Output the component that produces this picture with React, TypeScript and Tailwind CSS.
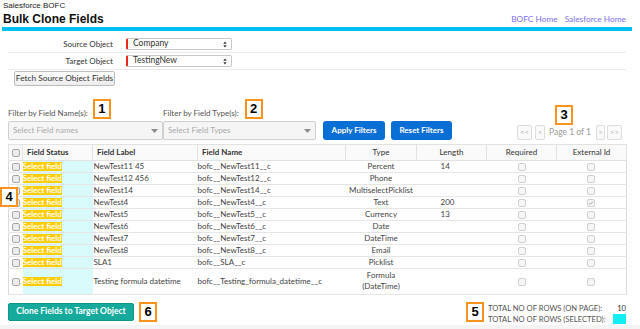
import React from 'react';

type Row = {
  label: string;
  name: string;
  type: string;
  length?: string;
  ext?: boolean;
  tall?: boolean;
};

const rows: Row[] = [
  { label: 'NewTest11 45', name: 'bofc__NewTest11__c', type: 'Percent', length: '14' },
  { label: 'NewTest12 456', name: 'bofc__NewTest12__c', type: 'Phone' },
  { label: 'NewTest14', name: 'bofc__NewTest14__c', type: 'MultiselectPicklist' },
  { label: 'NewTest4', name: 'bofc__NewTest4__c', type: 'Text', length: '200', ext: true },
  { label: 'NewTest5', name: 'bofc__NewTest5__c', type: 'Currency', length: '13' },
  { label: 'NewTest6', name: 'bofc__NewTest6__c', type: 'Date' },
  { label: 'NewTest7', name: 'bofc__NewTest7__c', type: 'DateTime' },
  { label: 'NewTest8', name: 'bofc__NewTest8__c', type: 'Email' },
  { label: 'SLA1', name: 'bofc__SLA__c', type: 'Picklist' },
  { label: 'Testing formula datetime', name: 'bofc__Testing_formula_datetime__c', type: 'Formula', tall: true },
];

function Tag({ n }: { n: string }) {
  return (
    <div className="flex h-[20px] w-[18px] shrink-0 items-center justify-center border-2 border-[#f7931e] bg-white font-['Liberation_Sans',Arial,sans-serif] text-[13px] font-bold leading-none text-black">
      {n}
    </div>
  );
}

function Check({ on = false, dark = false }: { on?: boolean; dark?: boolean }) {
  return (
    <span
      className={
        dark
          ? 'inline-flex h-[8px] w-[8px] items-center justify-center rounded-[2px] border border-[#a9a9a9] bg-[#ececec] align-middle'
          : 'inline-flex h-[8px] w-[8px] items-center justify-center rounded-[2px] border border-[#d0d0d0] bg-[#f6f6f6] align-middle'
      }
    >
      {on && (
        <svg viewBox="0 0 8 8" className="h-[6px] w-[6px]">
          <path d="M1.5 4.3l1.6 1.5L6.5 2.2" fill="none" stroke="#8a8a8a" strokeWidth="1.1" />
        </svg>
      )}
    </span>
  );
}

function ObjectSelect({ value }: { value: string }) {
  return (
    <div className="relative ml-[13px] flex h-[12px] w-[106px] items-center rounded-[2px] border border-[#c9c9c9] border-l-2 border-l-[#e8291c] bg-white pl-[5px] text-[8.5px] leading-none text-[#333]">
      {value}
      <svg viewBox="0 0 5 8" className="absolute right-[4px] top-[2px] h-[7px] w-[4px]">
        <path d="M0.4 3.2L2.5 0.4L4.6 3.2Z M0.4 4.8L2.5 7.6L4.6 4.8Z" fill="#333" />
      </svg>
    </div>
  );
}

function FilterSelect({ text }: { text: string }) {
  return (
    <div className="relative mt-[2px] flex h-[19px] items-center rounded-[2px] border border-[#cfcfcf] bg-[#f5f5f5] pl-[4px] text-[8px] text-[#a9a9a9]">
      {text}
      <svg viewBox="0 0 7 4" className="absolute right-[4px] top-[7px] h-[4px] w-[7px]">
        <path d="M0 0h7L3.5 4Z" fill="#8c8c8c" />
      </svg>
    </div>
  );
}

export default function App() {
  return (
    <div className="flex h-[329px] w-[640px] flex-col overflow-hidden bg-white font-['Lato',sans-serif] text-[#333]">
      <div className="px-[3px] pt-[1px]">
        <div className="font-['Liberation_Sans',Arial,sans-serif] text-[8px] leading-[10px] text-[#222]">Salesforce BOFC</div>
        <div className="flex h-[16px] items-center justify-between">
          <h1 className="font-['Liberation_Sans',Arial,sans-serif] text-[12px] font-bold leading-[16px] text-[#111]">
            Bulk Clone Fields
          </h1>
          <div className="mt-[1px] flex gap-[7px] pr-[11px] text-[8.3px] text-[#7d6ff5]">
            <span>BOFC Home</span>
            <span>Salesforce Home</span>
          </div>
        </div>
      </div>
      <div className="ml-[2px] h-[5px] w-[630px] bg-[#00c0f3]" />

      <div className="ml-[8px] w-[618px]">
        <div className="mt-[5px] flex h-[17px] items-center border-b border-[#ececec]">
          <div className="w-[105px] text-right text-[8px] text-[#333]">Source Object</div>
          <ObjectSelect value="Company" />
        </div>
        <div className="flex h-[17px] items-center border-b border-[#ececec]">
          <div className="w-[105px] text-right text-[8px] text-[#333]">Target Object</div>
          <ObjectSelect value="TestingNew" />
        </div>
        <button className="ml-[6px] mt-[1px] flex h-[15px] w-[101px] items-center justify-center rounded-[2px] border border-[#bdbdbd] bg-gradient-to-b from-white to-[#ececec] text-[8.3px] leading-none text-[#333]">
          Fetch Source Object Fields
        </button>

        <div className="mt-[13px] flex items-end">
          <div className="w-[155px]">
            <div className="flex items-end">
              <span className="mb-[1px] text-[8px] leading-[10px] text-[#555]">Filter by Field Name(s):</span>
              <div className="ml-[5px]">
                <Tag n="1" />
              </div>
            </div>
            <FilterSelect text="Select Field names" />
          </div>
          <div className="w-[153px]">
            <div className="flex items-end">
              <span className="mb-[1px] text-[8px] leading-[10px] text-[#555]">Filter by Field Type(s):</span>
              <div className="ml-[6px]">
                <Tag n="2" />
              </div>
            </div>
            <FilterSelect text="Select Field Types" />
          </div>
          <button className="ml-[7px] flex h-[19px] w-[62px] items-center justify-center rounded-[3px] bg-[#0a6fd4] text-[8px] font-bold text-white">
            Apply Filters
          </button>
          <button className="ml-[6px] flex h-[19px] w-[61px] items-center justify-center rounded-[3px] bg-[#0a6fd4] text-[8px] font-bold text-white">
            Reset Filters
          </button>
          <div className="ml-auto mr-[4px] flex flex-col">
            <div className="ml-[38px]">
              <Tag n="3" />
            </div>
            <div className="flex h-[15px] items-center text-[8px] text-[#9a9a9a]">
              <span className="flex h-[15px] w-[15px] items-center justify-center rounded-[2px] border border-[#dcdcdc] bg-[#fafafa] text-[#b5b5b5]">&lt;&lt;</span>
              <span className="ml-[3px] flex h-[15px] w-[10px] items-center justify-center rounded-[2px] border border-[#dcdcdc] bg-[#fafafa] text-[#b5b5b5]">&lt;</span>
              <span className="ml-[4px] text-[8.5px]">Page 1 of 1</span>
              <span className="ml-[5px] flex h-[15px] w-[9px] items-center justify-center rounded-[2px] border border-[#dcdcdc] bg-[#fafafa] text-[#b5b5b5]">&gt;</span>
              <span className="ml-[2px] flex h-[15px] w-[15px] items-center justify-center rounded-[2px] border border-[#dcdcdc] bg-[#fafafa] text-[#b5b5b5]">&gt;&gt;</span>
            </div>
          </div>
        </div>

        <div className="relative mt-[4px]">
          <table className="w-[618px] table-fixed border-collapse border border-[#dadada] text-[8px] text-[#444]">
            <colgroup>
              <col className="w-[14px]" />
              <col className="w-[70px]" />
              <col className="w-[105px]" />
              <col className="w-[148px]" />
              <col className="w-[71px]" />
              <col className="w-[70px]" />
              <col className="w-[70px]" />
              <col className="w-[70px]" />
            </colgroup>
            <thead>
              <tr className="h-[16px] bg-[#fafafa] text-[8px] text-[#333]">
                <th className="border border-[#e2e2e2] p-0 text-center font-normal">
                  <Check dark />
                </th>
                <th className="border border-[#e2e2e2] p-0 pl-[4px] text-left font-bold">Field Status</th>
                <th className="border border-[#e2e2e2] p-0 pl-[4px] text-left font-bold">Field Label</th>
                <th className="border border-[#e2e2e2] p-0 pl-[4px] text-left font-bold">Field Name</th>
                <th className="border border-[#e2e2e2] p-0 text-center font-normal">Type</th>
                <th className="border border-[#e2e2e2] p-0 text-center font-normal">Length</th>
                <th className="border border-[#e2e2e2] p-0 text-center font-normal">Required</th>
                <th className="border border-[#e2e2e2] p-0 text-center font-normal">External Id</th>
              </tr>
            </thead>
            <tbody>
              {rows.map((r) => (
                <tr key={r.name} className={r.tall ? 'h-[26px] border-b border-[#e6e6e6]' : 'h-[12px] border-b border-[#e6e6e6]'}>
                  <td className="p-0 text-center leading-none">
                    <Check dark />
                  </td>
                  <td className="bg-[#d8fafa] p-0 leading-none">
                    <span className="inline-block bg-[#ffcc00] text-[8px] font-bold leading-[9px] text-white">Select field</span>
                  </td>
                  <td className="p-0 pl-[1px] leading-[11px]">{r.label}</td>
                  <td className="p-0 leading-[11px]">{r.name}</td>
                  <td className="p-0 text-center leading-[11px]">
                    {r.tall ? (
                      <>
                        Formula
                        <br />
                        (DateTime)
                      </>
                    ) : (
                      r.type
                    )}
                  </td>
                  <td className="p-0 pl-[24px] leading-[11px]">{r.length}</td>
                  <td className="p-0 text-center leading-none">
                    <Check />
                  </td>
                  <td className="p-0 text-center leading-none">
                    <Check on={r.ext} />
                  </td>
                </tr>
              ))}
            </tbody>
          </table>
          <div className="absolute left-[-8px] top-[43px]">
            <Tag n="4" />
          </div>
        </div>

        <div className="mt-[7px] flex items-start justify-between">
          <div className="flex items-start">
            <button className="mt-[1px] flex h-[18px] w-[126px] items-center justify-center rounded-[2px] border border-[#0f958a] bg-[#15aa9c] text-[8.5px] font-bold text-white">
              Clone Fields to Target Object
            </button>
            <div className="ml-[5px]">
              <Tag n="6" />
            </div>
          </div>
          <div className="flex items-start">
            <Tag n="5" />
            <div className="ml-[4px] mt-[1px] w-[138px] text-[7.6px] leading-[11px] text-[#555]">
              <div className="flex justify-between">
                <span>TOTAL NO OF ROWS (ON PAGE):</span>
                <span className="text-[#333]">10</span>
              </div>
              <div className="flex items-center justify-between">
                <span>TOTAL NO OF ROWS (SELECTED):</span>
                <span className="h-[10px] w-[13px] bg-[#12eef2]" />
              </div>
            </div>
          </div>
        </div>
      </div>
      <div className="mt-auto h-[6px] bg-[#f4f4f4]" />
    </div>
  );
}
